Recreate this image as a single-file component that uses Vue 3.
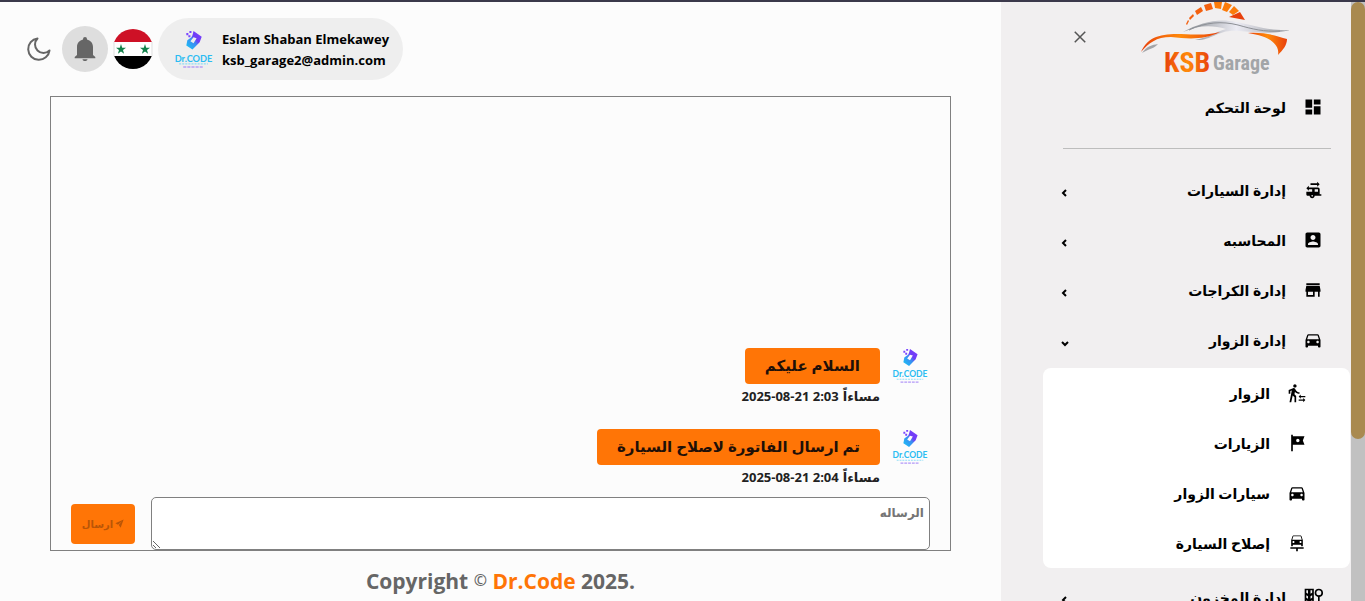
<script setup>
import { ref } from 'vue'

const icons = {
  dashboard: 'M3 13h8V3H3v10zm0 8h8v-6H3v6zm10 0h8V11h-8v10zm0-18v6h8V3h-8z',
  swap: 'M20 17v-6c0-1.1-.9-2-2-2H7V7l-3 3 3 3v-2h4v3H4v3c0 1.1.9 2 2 2h2c0 1.66 1.34 3 3 3s3-1.34 3-3h8v-2h-2zm-9 3c-.55 0-1-.45-1-1s.45-1 1-1 1 .45 1 1-.45 1-1 1zm7-6h-4v-3h4v3zM17 2v2H9v2h8v2l3-3-3-3z',
  account: 'M3 5v14c0 1.1.89 2 2 2h14c1.1 0 2-.9 2-2V5c0-1.1-.9-2-2-2H5c-1.11 0-2 .9-2 2zm12 4c0 1.66-1.34 3-3 3s-3-1.34-3-3 1.34-3 3-3 3 1.34 3 3zm-9 8c0-2 4-3.1 6-3.1s6 1.1 6 3.1v1H6v-1z',
  store: 'M20 4H4v2h16V4zm1 10v-2l-1-5H4l-1 5v2h1v6h10v-6h4v6h2v-6h1zm-9 4H6v-4h6v4z',
  car: 'M18.92 6.01C18.72 5.42 18.16 5 17.5 5h-11c-.66 0-1.21.42-1.42 1.01L3 12v8c0 .55.45 1 1 1h1c.55 0 1-.45 1-1v-1h12v1c0 .55.45 1 1 1h1c.55 0 1-.45 1-1v-8l-2.08-5.99zM6.5 16c-.83 0-1.5-.67-1.5-1.5S5.67 13 6.5 13s1.5.67 1.5 1.5S7.33 16 6.5 16zm11 0c-.83 0-1.5-.67-1.5-1.5s.67-1.5 1.5-1.5 1.5.67 1.5 1.5-.67 1.5-1.5 1.5zM5 11l1.5-4.5h11L19 11H5z',
  walk: 'M16.49 15.5v-1.75L14 16.25l2.49 2.5V17H22v-1.5zm3.02 4.25H14v1.5h5.51V23L22 20.5 19.51 18zM9.5 5.5c1.1 0 2-.9 2-2s-.9-2-2-2-2 .9-2 2 .9 2 2 2zM5.75 8.9L3 23h2.1l1.75-8L9 17v6h2v-7.55L8.95 13.4l.6-3C10.85 12 12.8 13 15 13v-2c-1.85 0-3.45-1-4.35-2.45l-.95-1.6C9.35 6.35 8.7 6 8 6c-.25 0-.5.05-.75.15L2 8.3V13h2V9.65z',
  flag: 'M21 4H7V2H5v20h2v-8h14l-2-5 2-5zm-6 5c0 1.1-.9 2-2 2s-2-.9-2-2 .9-2 2-2 2 .9 2 2z',
  repair: 'M16.22 12c.68 0 1.22-.54 1.22-1.22 0-.67-.54-1.22-1.22-1.22S15 10.11 15 10.78c0 .68.55 1.22 1.22 1.22zm-9.66-1.22c0 .67.54 1.22 1.22 1.22S9 11.46 9 10.78c0-.67-.54-1.22-1.22-1.22s-1.22.55-1.22 1.22zM7.61 4L6.28 8h11.43l-1.33-4H7.61zM16.28 3s.54.01.92.54l.05.07c.07.11.14.24.19.4C17.66 4.66 19 8.69 19 8.69v6.5c0 .45-.35.81-.78.81h-.44c-.44 0-.78-.36-.78-.81V14H7v1.19c0 .45-.35.81-.78.81h-.44c-.43 0-.78-.36-.78-.81v-6.5l1.55-4.68c.05-.15.12-.28.19-.4l.06-.06C7.18 3.02 7.72 3 7.72 3h8.56zM4 17.01h16V19h-7v3h-2v-3H4z',
  stock: 'M2 2h11v20H2zM4 4v3l2 1V4zM11 4v3l-2 1V4zM4 10v3l2 1v-3zM11 10v3l-2 1v-3zM4 16v3l2 1v-3zM11 16v3l-2 1v-3zM19 2a5 5 0 0 0-1 9.900v10h2v-10A5 5 0 0 0 19 2zm0 2a3 3 0 1 1 0 6 3 3 0 0 1 0-6z'
}
const groups = [
  { label: 'إدارة السيارات', icon: 'swap' },
  { label: 'المحاسبه', icon: 'account' },
  { label: 'إدارة الكراجات', icon: 'store' },
  { label: 'إدارة الزوار', icon: 'car', open: true }
]
const visitors = [
  { label: 'الزوار', icon: 'walk' },
  { label: 'الزيارات', icon: 'flag' },
  { label: 'سيارات الزوار', icon: 'car' },
  { label: 'إصلاح السيارة', icon: 'repair' }
]
const messages = [
  { text: 'السلام عليكم', date: '2025-08-21', time: '2:03' },
  { text: 'تم ارسال الفاتورة لاصلاح السيارة', date: '2025-08-21', time: '2:04' }
]
const draft = ref('')
</script>

<template>
  <div class="page">
    <svg class="defs" aria-hidden="true">
      <defs>
        <linearGradient id="mark" x1="0" y1="1" x2="1" y2="0">
          <stop offset="0" stop-color="#16c8f5" />
          <stop offset="0.45" stop-color="#3b8bf2" />
          <stop offset="0.6" stop-color="#6f3df5" />
          <stop offset="1" stop-color="#7a3cff" />
        </linearGradient>
        <symbol id="drcode" viewBox="0 0 38 38">
          <path fill="url(#mark)" fill-rule="evenodd" d="M19 1l8 5.500-2 5.500-7 7-6-4 1-5 4-3 1-2zM19 7l3 1-3 5-3-2z" />
          <path fill="#7a46ff" d="M15 1h2v2h-2zM12 3h2v2h-2zM14 5h2v2h-2z" />
          <text class="word" x="19" y="31" text-anchor="middle">Dr.CODE</text>
          <path d="M5 33h28" stroke="#8edcf5" stroke-dasharray="2 1" />
          <path d="M9 36h20" stroke="#9a78f5" stroke-dasharray="3 1" />
        </symbol>
      </defs>
    </svg>

    <main class="main">
      <header class="topbar">
        <button class="plain moon" aria-label="Dark mode">
          <svg viewBox="0 0 24 24"><path d="M10.500 1.500A10.700 10.700 0 1 0 22.500 13.500 7.500 7.500 0 0 1 10.500 1.500z" fill="none" stroke="#666" stroke-width="2" stroke-linejoin="round" /></svg>
        </button>
        <button class="plain bell" aria-label="Notifications">
          <svg viewBox="0 0 24 24"><path fill="#666" d="M12 24c1.400 0 2.500-.8 2.500-1.800h-5c0 1 1.100 1.800 2.500 1.800zM20 18V10c0-4-2.600-6.700-6-7.500V2a2 2 0 0 0-4 0v.5C6.600 3.300 4 6 4 10v8l-2.300 2v1.200h20.600V20z" /></svg>
        </button>
        <button class="plain flag" aria-label="Language">
          <svg viewBox="0 0 40 40">
            <clipPath id="round"><circle cx="20" cy="20" r="20" /></clipPath>
            <g clip-path="url(#round)">
              <path fill="#ce1126" d="M0 0h40v13H0z" /><path fill="#fff" d="M0 13h40v14H0z" /><path d="M0 27h40v13H0z" />
              <path fill="#12804a" d="M8 15l1.200 3.700H13l-3 2.300 1.100 3.700L8 22.400l-3.100 2.300L6 21l-3-2.300h3.800zM32 15l1.200 3.700H37l-3 2.300 1.100 3.700-3.100-2.300-3.100 2.300L30 21l-3-2.300h3.800z" />
            </g>
            <path d="M1 13v14M39 13v14" stroke="#ddd" />
          </svg>
        </button>
        <div class="profile">
          <svg class="avatar" role="img" aria-label="Dr.Code"><use href="#drcode" /></svg>
          <div class="who"><span>Eslam Shaban Elmekawey</span><span>ksb_garage2@admin.com</span></div>
        </div>
      </header>

      <section class="chat">
        <div class="messages">
          <article v-for="m in messages" :key="m.time" class="message">
            <svg class="face" role="img" aria-label="Dr.Code"><use href="#drcode" /></svg>
            <div class="body">
              <p class="bubble">{{ m.text }}</p>
              <time class="stamp"><bdi>{{ m.date }} {{ m.time }}</bdi><span>مساءاً</span></time>
            </div>
          </article>
        </div>
        <form class="composer" @submit.prevent>
          <textarea v-model="draft" placeholder="الرساله" aria-label="الرساله"></textarea>
          <button class="send" :disabled="!draft">
            <svg viewBox="0 0 24 24"><path fill="currentColor" d="M23 1L1 11l7 4L19 5 10 16l5 7z" /></svg>
            <span>ارسال</span>
          </button>
        </form>
      </section>

      <footer class="footer">Copyright <span class="sign">©</span> <a href="#">Dr.Code</a> 2025.</footer>
    </main>

    <aside class="sidebar">
      <div class="brand">
        <svg class="logo" viewBox="0 0 150 76" role="img" aria-label="KSB Garage">
          <defs>
            <linearGradient id="fire"><stop offset="0" stop-color="#e8400c" /><stop offset="0.5" stop-color="#ff8a0a" /><stop offset="1" stop-color="#e8400c" /></linearGradient>
            <linearGradient id="steel"><stop offset="0" stop-color="#85898e" /><stop offset="0.5" stop-color="#ececf4" /><stop offset="1" stop-color="#9c9ea4" /></linearGradient>
          </defs>
          <g fill="#f4600f">
            <path d="M47 22l2-4 1 1-2 4zM50 16l4-4 1 2-4 4z" />
            <path d="M56 9l6-4 2 4-6 4zM65 3l7-2 2 6-7 2z" />
            <path fill="#fb7b0b" d="M75 0h8l-1 7-6-1zM86 0l7 3-5 7-5-2z" />
            <path fill="#fb7b0b" d="M95 4l5 5-6 4-4-3z" /><path fill="#e8400c" d="M101 10l5 8-16-3z" />
          </g>
          <path fill="url(#steel)" d="M44 30c18-10 36-14 53-10 20 4 34 9 54 8-16 5-37 2-51 1-22-2-26 10-44 9 15-3 20-8 31-11-14-4-27-4-43 3z" />
          <path fill="none" stroke="#8d9096" d="M50 28c17-8 33-9 49-5 14 4 26 7 42 6" />
          <path fill="url(#fire)" d="M2 50c7-16 20-18 40-18 20 1 26 1 39-2-16 8-31 7-49 5C17 35 10 41 2 50z" />
          <path fill="#a2a4a8" d="M3 51c5-7 10-8 16-9-4 5-8 4-16 9z" />
          <path fill="url(#fire)" d="M109 31c18-1 29 3 39 6 0 6-4 11-9 16 2-11-9-19-30-22z" />
          <text class="ksb" x="25" y="70" fill="url(#fire)">KSB</text>
          <text class="garage" x="74" y="68">Garage</text>
        </svg>
        <button class="plain close" aria-label="Close menu">
          <svg viewBox="0 0 24 24"><path d="M5 5l14 14M19 5L5 19" stroke="#555" stroke-width="2" /></svg>
        </button>
      </div>
      <nav>
        <a class="item" href="#"><svg class="icon" viewBox="0 0 24 24"><path :d="icons.dashboard" /></svg><span>لوحة التحكم</span></a>
        <hr />
        <button v-for="g in groups" :key="g.label" class="plain item" :aria-expanded="!!g.open">
          <svg class="icon" viewBox="0 0 24 24"><path :d="icons[g.icon]" /></svg><span>{{ g.label }}</span>
          <svg class="chevron" viewBox="0 0 8 8"><path :d="g.open ? 'M1 3l3 3 3-3' : 'M5 1L2 4l3 3'" /></svg>
        </button>
        <div class="submenu">
          <a v-for="v in visitors" :key="v.label" class="item" href="#"><svg class="icon" viewBox="0 0 24 24"><path :d="icons[v.icon]" /></svg><span>{{ v.label }}</span></a>
        </div>
        <button class="plain item" aria-expanded="false">
          <svg class="icon" viewBox="0 0 24 24"><path fill-rule="evenodd" :d="icons.stock" /></svg><span>إدارة المخزون</span>
          <svg class="chevron" viewBox="0 0 8 8"><path d="M5 1L2 4l3 3" /></svg>
        </button>
      </nav>
    </aside>
    <div class="track" aria-hidden="true"><div class="thumb"></div></div>
  </div>
</template>

<style>
body { margin: 0; }
</style>

<style scoped>
.page {
  box-sizing: border-box;
  display: flex;
  height: 100vh;
  overflow: hidden;
  border-top: 2px solid #3b394b;
  background: #fcfcfc;
  color: #000;
  font-family: "Open Sans", "DejaVu Sans", sans-serif;
  font-weight: 600;
}
.page * { box-sizing: border-box; }
.defs { position: absolute; width: 0; height: 0; }
.word { font: 700 9px Lato, sans-serif; fill: #2bbcf2; direction: ltr; }
.plain { border: 0; padding: 0; background: none; color: inherit; font: inherit; cursor: pointer; }
.main { flex: 1; min-width: 0; display: flex; flex-direction: column; }
.topbar { display: flex; align-items: center; height: 94px; padding-left: 27px; }
.moon svg { display: block; width: 24px; height: 24px; }
.bell { display: grid; place-items: center; width: 46px; height: 46px; margin-left: 11px; border-radius: 50%; background: #dedede; }
.bell svg { width: 24px; height: 24px; }
.flag { width: 40px; height: 40px; margin-left: 5px; }
.flag svg { display: block; }
.profile { display: flex; align-items: center; gap: 9px; height: 62px; margin-left: 5px; padding: 0 14px 0 16px; border-radius: 31px; background: #eee; }
.avatar { width: 39px; height: 39px; }
.who { display: flex; flex-direction: column; padding-top: 2px; font-size: 13px; font-weight: 700; line-height: 21px; white-space: nowrap; }
.chat { display: flex; flex-direction: column; height: 455px; margin: 0 50px; border: 1px solid #808080; direction: rtl; }
.messages { flex: 1; display: flex; flex-direction: column; justify-content: flex-end; gap: 21px; padding: 0 22px 8px; }
.message { display: flex; gap: 12px; height: 60px; }
.face { width: 36px; height: 36px; }
.body { display: flex; flex-direction: column; align-items: flex-start; }
.bubble { flex: none; height: 36px; margin: 0; padding: 0 20px; border-radius: 4px; background: #ff7506; color: #1f1008; font-size: 15px; line-height: 34px; }
.stamp { display: flex; gap: 4px; font-size: 13px; font-weight: 700; line-height: 24px; color: #222; direction: ltr; }
.composer { display: flex; align-items: center; gap: 16px; padding: 0 20px; }
.composer textarea { flex: 1; height: 53px; padding: 5px; border: 1px solid #808080; border-radius: 5px; background: #fff; font: inherit; font-size: 12px; line-height: 20px; resize: both; }
.composer textarea::placeholder { color: #757575; }
.send { display: flex; align-items: center; justify-content: center; gap: 2px; width: 64px; height: 40px; padding: 0; border: 0; border-radius: 4px; background: #ff7506; color: #b95507; font: inherit; font-size: 10px; }
.send svg { width: 9px; height: 9px; }
.footer { padding-top: 11px; text-align: center; color: #666; font-size: 21px; font-weight: 700; line-height: 36px; }
.footer .sign { font-size: 16px; font-weight: 600; vertical-align: 3px; }
.footer a { color: #ff7506; text-decoration: none; }
.sidebar { width: 350px; flex: none; overflow: hidden; background: #f1eff0; direction: rtl; }
.brand { display: flex; justify-content: space-between; align-items: flex-start; height: 80px; padding: 0 62px 0 70px; }
.logo { width: 150px; height: 76px; direction: ltr; }
.ksb, .garage { font-family: "Roboto Condensed", "Liberation Sans Narrow", sans-serif; font-weight: 700; }
.ksb { font-size: 28px; }
.garage { font-size: 20px; fill: #a2a5a8; }
.close { width: 18px; height: 18px; margin-top: 26px; }
.close svg { display: block; }
.item { display: flex; align-items: center; gap: 17px; width: 100%; height: 50px; padding: 0 28px 0 60px; color: #000; font-size: 14px; text-decoration: none; white-space: nowrap; }
.icon { flex: none; width: 20px; height: 20px; }
.chevron { width: 8px; height: 8px; margin-right: auto; margin-top: 6px; fill: none; stroke: #000; stroke-width: 2; }
hr { height: 1px; margin: 16px 20px 16px 62px; border: 0; background: #bdbdbd; }
.submenu { margin: 3px 1px 4px 42px; border-radius: 8px; background: #fff; }
.submenu .item { padding-right: 43px; }
.track { flex: none; width: 14px; background: #c1c1c1; }
.thumb { height: 73%; border-radius: 7px; background: #a98a50; }
</style>
